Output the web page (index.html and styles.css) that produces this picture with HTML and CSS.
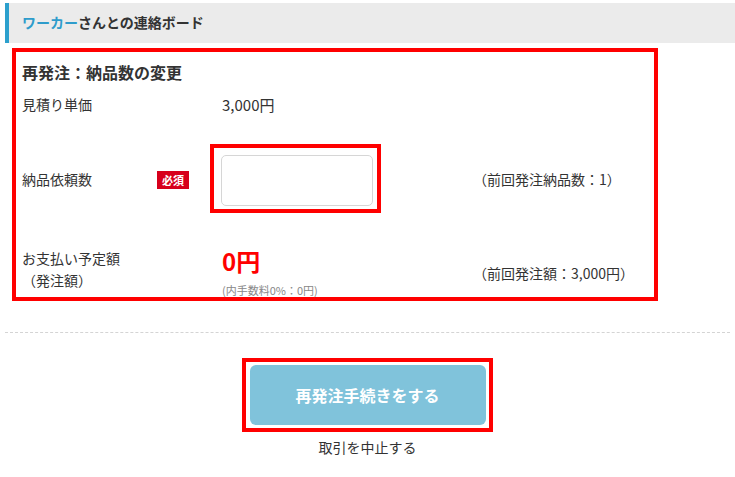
FILE: index.html
```html
<!DOCTYPE html>
<html lang="ja">
<head>
    <meta charset="UTF-8">
    <meta name="viewport" content="width=device-width, initial-scale=1.0">
    <title>連絡ボード</title>
    <link rel="stylesheet" href="styles.css">
</head>
<body>
    <div class="board-head"><span class="worker">ワーカー</span>さんとの連絡ボード</div>

    <div class="order-box">
        <h2 class="order-title">再発注：納品数の変更</h2>

        <div class="row row-price">
            <div class="label">見積り単価</div>
            <div></div>
            <div class="value">3,000円</div>
            <div></div>
        </div>

        <div class="row row-qty">
            <div class="label">納品依頼数</div>
            <div><span class="badge">必須</span></div>
            <div class="input-wrap"><input type="text" class="qty-input"></div>
            <div class="note">（前回発注納品数：1）</div>
        </div>

        <div class="row row-pay">
            <div class="label">お支払い予定額<br>（発注額）</div>
            <div></div>
            <div class="value">
                <div class="amount">0円</div>
                <div class="fee">(内手数料0%：0円)</div>
            </div>
            <div class="note">（前回発注額：3,000円）</div>
        </div>
    </div>

    <hr class="divider">

    <div class="actions">
        <div class="btn-wrap"><button class="btn-reorder">再発注手続きをする</button></div>
        <a class="cancel" href="#">取引を中止する</a>
    </div>
</body>
</html>
```

FILE: styles.css
```css
*{
    padding: 0;
    margin: 0;
    box-sizing: border-box;
}
body{
    font-family: "Noto Sans CJK JP", "Noto Sans", sans-serif;
    font-size: 14px;
    color: #333;
    background: #fff;
}
.board-head{
    margin: 3px 0 0 5px;
    height: 40px;
    line-height: 39px;
    padding-left: 13px;
    border-left: 4px solid #2ca0cd;
    background-color: #ebebeb;
    font-weight: bold;
    font-size: 14px;
}
.worker{
    color: #2e9ccb;
}
.order-box{
    margin: 5px 0 0 12px;
    width: 646px;
    height: 253px;
    border: 4px solid #f00;
    padding: 10px 0 0 6px;
}
.order-title{
    font-size: 16px;
    line-height: 20px;
    font-weight: bold;
}
.row{
    display: grid;
    grid-template-columns: 135px 53px 263px 1fr;
    align-items: center;
}
.row-price{
    margin-top: 10px;
    height: 24px;
}
.row-price .value{
    font-size: 15px;
}
.row-qty{
    margin-top: 28px;
    height: 69px;
}
.row-pay{
    margin-top: 34px;
    align-items: start;
}
.row-pay .label{
    line-height: 22px;
}
.row-pay .note{
    align-self: center;
    padding-top: 2px;
}
.value{
    padding-left: 12px;
}
.badge{
    display: inline-block;
    background-color: #d7001c;
    color: #fff;
    font-size: 11px;
    font-weight: bold;
    line-height: 18px;
    width: 32px;
    text-align: center;
    margin-top: 2px;
}
.input-wrap{
    width: 171px;
    height: 69px;
    border: 4px solid #f00;
    padding: 7px 4px 4px 7px;
}
.qty-input{
    width: 152px;
    height: 51px;
    border: 1px solid #d6d6d6;
    border-radius: 5px;
    background: #fff;
    outline: none;
}
.amount{
    color: #f00;
    font-size: 24px;
    font-weight: bold;
    line-height: 28px;
}
.fee{
    color: #888;
    font-size: 11px;
    line-height: 14px;
    margin-top: 8px;
}
.divider{
    border: none;
    border-top: 1px dashed #d4d4d4;
    margin: 31px 5px 0 5px;
}
.actions{
    display: flex;
    flex-direction: column;
    align-items: center;
    padding-top: 25px;
}
.btn-wrap{
    border: 4px solid #f00;
    padding: 3px 3px 3px 4px;
    margin-left: -1px;
}
.btn-reorder{
    display: block;
    width: 236px;
    height: 60px;
    border: none;
    border-radius: 6px;
    background-color: #80c3db;
    color: #fff;
    font-family: inherit;
    font-size: 16px;
    font-weight: bold;
    cursor: pointer;
}
.cancel{
    margin-top: 5px;
    line-height: 20px;
    color: #333;
    text-decoration: none;
}
```
